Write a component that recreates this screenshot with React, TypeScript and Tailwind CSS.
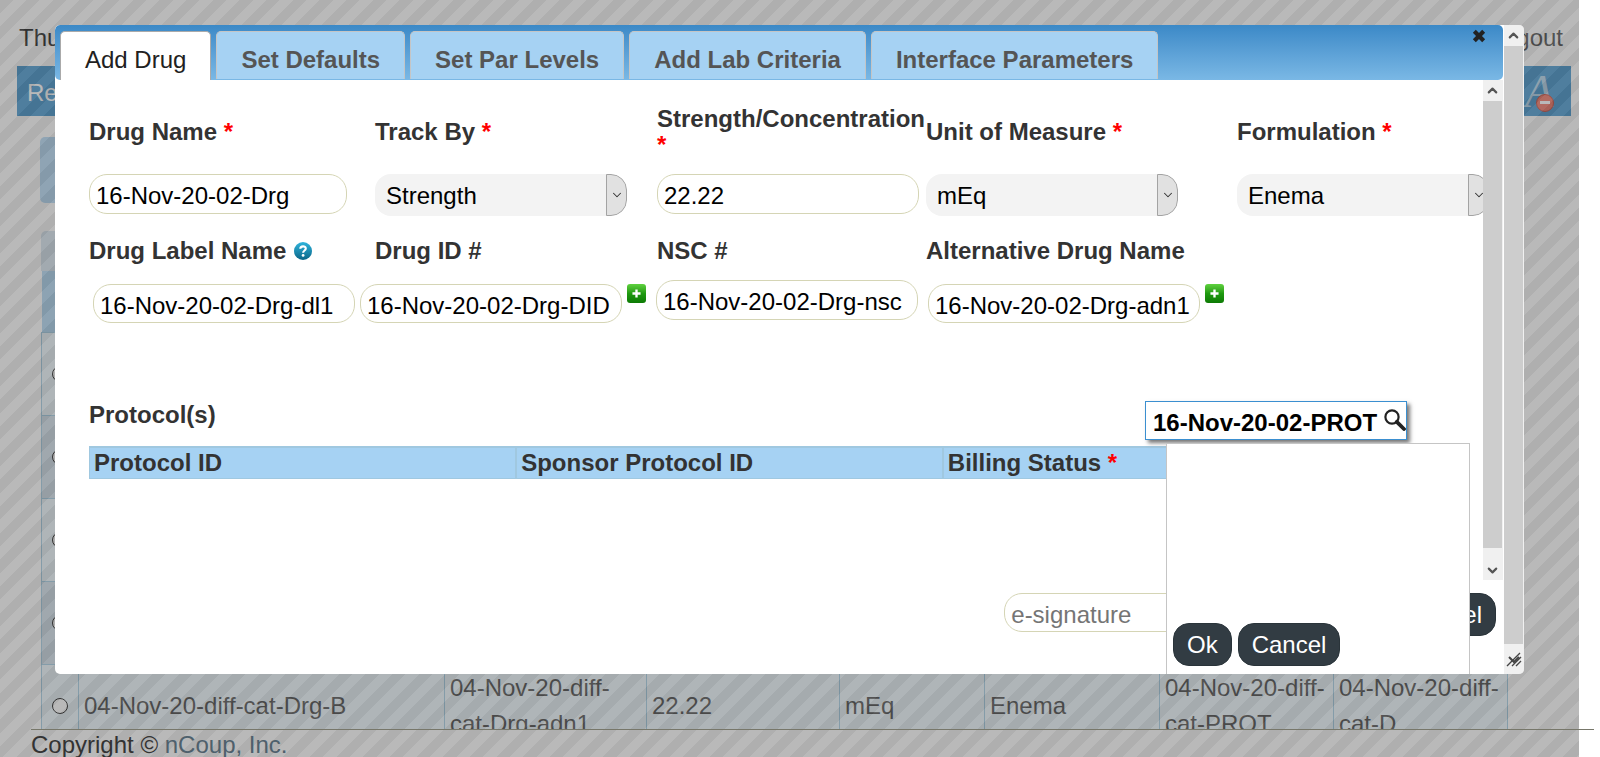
import React from "react";
import { ChevronDown, ChevronUp } from "lucide-react";

const inputBase =
  "rounded-[18px] border border-[#d5d5b5] bg-white px-[6px] pt-1 text-[24px] leading-[30px] text-black outline-none";

function Star() {
  return <span className="text-[#ff0000]">*</span>;
}

function Select({ id, value }: { id: string; value: string }) {
  return (
    <div className="relative flex h-[42px] w-[252px] shrink-0 overflow-hidden rounded-[16px] bg-[#f3f3f3]">
      <select
        id={id}
        defaultValue={value}
        className="w-full appearance-none bg-transparent pt-[2px] pl-[11px] text-[24px] font-normal text-black outline-none"
      >
        <option>{value}</option>
      </select>
      <span className="pointer-events-none absolute inset-y-0 right-0 flex w-[21px] items-center justify-center rounded-r-[16px] border border-[#a3a3a3] bg-[#e1e1e1]">
        <ChevronDown className="size-[14px] shrink-0 text-[#333]" strokeWidth={1.8} />
      </span>
    </div>
  );
}

function Field({ id, label, required, children }: { id: string; label: string; required?: boolean; children: React.ReactNode }) {
  return (
    <div className="flex min-w-0 flex-col">
      <div className="flex h-[70px] items-center">
        <label htmlFor={id} className="leading-[26px]">
          {label} {required && <Star />}
        </label>
      </div>
      <div className="flex h-[54px] items-start pt-[7px]">{children}</div>
    </div>
  );
}

function AddButton({ label }: { label: string }) {
  return (
    <button
      aria-label={label}
      className="flex size-[19px] items-center justify-center rounded-[3px] bg-linear-to-b from-[#5fd23f] via-[#1f9a10] to-[#0d7a05]"
    >
      <svg viewBox="0 0 10 10" className="size-[9px]" aria-hidden="true">
        <path d="M5 0.5v9M0.5 5h9" stroke="#fff" strokeWidth="2.6" />
      </svg>
    </button>
  );
}

function ScrollBar({ end, children }: { end: string; children: React.ReactNode }) {
  return (
    <div aria-hidden="true" className="flex w-[20px] shrink-0 flex-col border-r border-[#f0f0f0] bg-[#cdcdcd]">
      <div className="flex h-[21px] items-center justify-center bg-[#f0f0f0]">
        <ChevronUp className="size-[15px] text-[#555]" strokeWidth={3.4} />
      </div>
      <div className="flex-1" />
      <div className={`${end} flex items-center justify-center bg-[#f0f0f0]`}>{children}</div>
    </div>
  );
}

const darkButton =
  "h-[43px] rounded-[16px] border border-[#2a343a] bg-[#323c43] px-[13px] text-[24px] text-white";

const tabs = ["Set Defaults", "Set Par Levels", "Add Lab Criteria", "Interface Parameters"];

function Dialog() {
  return (
    <section
      role="dialog"
      aria-label="Add Drug"
      className="absolute top-[25px] right-[76px] left-[55px] flex overflow-hidden rounded-[5px] bg-white text-[#333]"
    >
      <div className="relative flex min-w-0 flex-1 flex-col">
        <div className="mr-px flex h-[55px] items-end gap-[5px] rounded-[5px] bg-linear-to-b from-[#3b89c7] to-[#7ab8e5] pl-[5px]">
          <button className="h-[49px] rounded-t-[5px] border border-b-0 border-[#aaa] bg-white px-6 pt-2 text-[24px] text-[#212121]">
            Add Drug
          </button>
          {tabs.map((t) => (
            <button
              key={t}
              className="mb-px h-[48px] rounded-t-[5px] border border-b-0 border-[#c5c5c5] bg-[#a6d2f3] px-6 pt-[9px] text-[24px] font-bold text-[#555]"
            >
              {t}
            </button>
          ))}
          <button aria-label="Close" className="mr-[17px] mb-[37px] ml-auto">
            <svg viewBox="0 0 12 12" className="size-[14px]" aria-hidden="true">
              <path d="M2 2l8 8M10 2l-8 8" stroke="#222" strokeWidth="3.6" />
            </svg>
          </button>
        </div>

        <div className="flex h-[500px]">
          <div className="min-w-0 flex-1 overflow-hidden pl-[34px] text-[24px] font-bold">
            <div className="grid grid-cols-[286fr_282fr_269fr_311fr_246fr] pt-[17px]">
              <Field id="name" label="Drug Name" required>
                <input id="name" defaultValue="16-Nov-20-02-Drg" className={`${inputBase} h-[40px] w-[258px] font-normal`} />
              </Field>
              <Field id="track" label="Track By" required>
                <Select id="track" value="Strength" />
              </Field>
              <Field id="strength" label="Strength/Concentration" required>
                <input id="strength" defaultValue="22.22" className={`${inputBase} h-[40px] w-[262px] font-normal`} />
              </Field>
              <Field id="unit" label="Unit of Measure" required>
                <Select id="unit" value="mEq" />
              </Field>
              <Field id="form" label="Formulation" required>
                <Select id="form" value="Enema" />
              </Field>
            </div>

            <div className="mt-[12px] grid grid-cols-[286fr_282fr_269fr_557fr] leading-[36px]">
              <div className="flex items-center gap-2">
                <label htmlFor="labelName">Drug Label Name</label>
                <svg viewBox="0 0 18 18" className="size-[18px]" aria-hidden="true">
                  <defs>
                    <linearGradient id="help" x1="0" y1="0" x2="0" y2="1">
                      <stop offset="0" stopColor="#2fb4dc" />
                      <stop offset="1" stopColor="#0a6587" />
                    </linearGradient>
                  </defs>
                  <circle cx="9" cy="9" r="9" fill="url(#help)" />
                  <path d="M6.3 6.8C6.3 3.6 11.8 3.5 11.8 6.6C11.8 8.6 9.2 8.4 9.1 10.7" fill="none" stroke="#fff" strokeWidth="2.1" />
                  <circle cx="9.1" cy="13.4" r="1.4" fill="#fff" />
                </svg>
              </div>
              <label htmlFor="drugId">Drug ID #</label>
              <label htmlFor="nsc">NSC #</label>
              <label htmlFor="alt">Alternative Drug Name</label>
            </div>
            <div className="mt-[11px] flex items-start gap-[10px] font-normal">
              <div className="flex items-start gap-[5px] pt-1 pl-1">
                <input id="labelName" defaultValue="16-Nov-20-02-Drg-dl1" className={`${inputBase} h-[39px] w-[262px]`} />
                <input id="drugId" defaultValue="16-Nov-20-02-Drg-DID" className={`${inputBase} h-[39px] w-[262px]`} />
                <AddButton label="Add drug ID" />
              </div>
              <input id="nsc" defaultValue="16-Nov-20-02-Drg-nsc" className={`${inputBase} h-[40px] w-[262px]`} />
              <div className="flex items-start gap-[5px] pt-1">
                <input id="alt" defaultValue="16-Nov-20-02-Drg-adn1" className={`${inputBase} h-[39px] w-[272px]`} />
                <AddButton label="Add alternative name" />
              </div>
            </div>

            <div className="mt-[78px] flex items-start justify-between pr-[76px]">
              <label htmlFor="protocol" className="leading-[28px]">
                Protocol(s)
              </label>
              <div className="relative flex">
                <input
                  id="protocol"
                  defaultValue="16-Nov-20-02-PROT"
                  className="h-[39px] w-[262px] border border-[#3b8fd0] bg-white px-[7px] pt-1 font-bold text-black shadow-[3px_3px_4px_#777] outline-none"
                />
                <svg viewBox="0 0 22 22" className="absolute top-[8px] right-[1px] size-[22px]" aria-hidden="true">
                  <circle cx="8" cy="8" r="6.600" fill="none" stroke="#222" strokeWidth="2.2" />
                  <path d="M12.8 12.8L20 20" stroke="#222" strokeWidth="3.8" strokeLinecap="round" />
                </svg>
              </div>
            </div>
            <table className="mt-[6px] w-[1281px] max-w-full table-fixed border-collapse text-left leading-[28px]">
              <thead>
                <tr className="border border-t-2 border-[#a0c8e0] bg-[#a6d2f3]">
                  <th className="border-r-2 border-[#a0c8e0] px-1 py-px">Protocol ID</th>
                  <th className="border-r-2 border-[#a0c8e0] px-1 py-px">Sponsor Protocol ID</th>
                  <th className="px-1 py-px">
                    Billing Status <Star />
                  </th>
                </tr>
              </thead>
            </table>
          </div>
          <ScrollBar end="h-[32px] pt-3">
            <ChevronDown className="size-[15px] text-[#555]" strokeWidth={3.4} />
          </ScrollBar>
          <div className="w-px" />
        </div>

        <div className="flex h-[94px] items-start justify-end gap-2 pt-[13px] pr-[8px]">
          <input
            type="password"
            aria-label="e-signature"
            placeholder="e-signature"
            className={`${inputBase} h-[39px] w-[262px] placeholder:text-[#757575]`}
          />
          <button className={`${darkButton} w-[111px]`}>Save</button>
          <button className={darkButton}>Cancel</button>
        </div>

        <div className="absolute top-[418px] right-[34px] bottom-0 flex w-[304px] items-end gap-[6px] border border-b-0 border-[#c5c5c5] bg-white pb-[8px] pl-[6px]">
          <button className={darkButton}>Ok</button>
          <button className={darkButton}>Cancel</button>
        </div>
      </div>
      <ScrollBar end="h-[30px]">
        <svg viewBox="0 0 16 16" className="size-[16px]" aria-hidden="true">
          <path d="M1 15L14 2M6 15L15 6M10 15L15 10" stroke="#444" strokeWidth="1.4" />
          <path d="M3 6l5 5 5-5" fill="none" stroke="#444" strokeWidth="2" />
        </svg>
      </ScrollBar>
    </section>
  );
}

const rows = [0, 1, 2, 3, 4];
const values = ["04-Nov-20-diff-cat-Drg-B", "04-Nov-20-diff-cat-Drg-adn1", "22.22", "mEq", "Enema", "04-Nov-20-diff-cat-PROT", "04-Nov-20-diff-cat-D"];

export default function App() {
  return (
    <div className="relative flex h-screen flex-col overflow-hidden bg-white font-['Liberation_Sans',Arial,sans-serif] text-[24px]">
      <main className="min-h-0 flex-1 overflow-hidden text-[#333]">
        <div className="flex h-[66px] items-start justify-between pt-[20px] pr-[37px] pl-[19px] leading-[36px]">
          <span className="text-black">Thu</span>
          <a href="#logout">Logout</a>
        </div>
        <nav className="mr-[29px] ml-[17px] flex h-[50px] items-center justify-between bg-[#2b88c8] pl-[10px] text-white">
          <a href="#reports" className="pt-[3px]">
            Re
          </a>
          <svg viewBox="0 0 68 50" className="h-[50px] w-[68px]" aria-hidden="true">
            <text x="22" y="41" fontSize="46" fontStyle="italic" fontFamily="Liberation Serif, serif" fill="#a9cfe8">
              A
            </text>
            <circle cx="42" cy="37" r="8.500" fill="#f0604c" stroke="#c03020" />
            <rect x="37" y="35" width="10" height="3" fill="#fff" />
          </svg>
        </nav>
        <div className="mt-[21px] mr-[93px] ml-[40px] h-[66px] rounded-[5px] bg-[#abd5f5]" />
        <div className="mt-[28px] mr-[93px] ml-[41px] h-[40px] rounded-t-[5px] bg-[#d1e1ed]" />
        <table className="ml-[41px] w-[calc(100%-133px)] table-fixed border-collapse leading-[36px]">
          <colgroup>
            <col className="w-[37px]" />
            <col />
            <col className="w-[202px]" />
            <col className="w-[193px]" />
            <col className="w-[145px]" />
            <col className="w-[175px]" />
            <col className="w-[174px]" />
            <col className="w-[174px]" />
          </colgroup>
          <tbody>
            <tr className="h-[61px] bg-[#a6d2f3]">
              <td colSpan={8} />
            </tr>
            {rows.map((r) => (
              <tr key={r} className={`h-[83px] ${r % 2 ? "bg-[#cddde9]" : "bg-[#ebf7fd]"}`}>
                <td className="border border-[#95c4de] text-center">
                  <input
                    type="radio"
                    name="drug"
                    aria-label={`Row ${r + 1}`}
                    className="mx-auto block size-[16px] appearance-none rounded-full border border-black bg-white"
                  />
                </td>
                {values.map((v) => (
                  <td key={v} className="border border-[#95c4de] pr-0 pl-[5px]">
                    {r === 4 ? v : null}
                  </td>
                ))}
              </tr>
            ))}
          </tbody>
        </table>
      </main>
      <div className="absolute inset-y-0 right-[21px] left-0 bg-[repeating-linear-gradient(135deg,#5f5f5f_0,#5f5f5f_calc(100%/12),#737373_calc(100%/12),#737373_calc(100%/6))] bg-size-[80px_80px] opacity-50" />
      <footer className="relative mr-[6px] ml-[31px] h-[28px] border-t border-[#77776a] leading-[30px] text-[#333]">
        Copyright ©{" "}
        <a href="#ncoup" className="text-[#4e606c]">
          nCoup, Inc.
        </a>
      </footer>
      <Dialog />
    </div>
  );
}
